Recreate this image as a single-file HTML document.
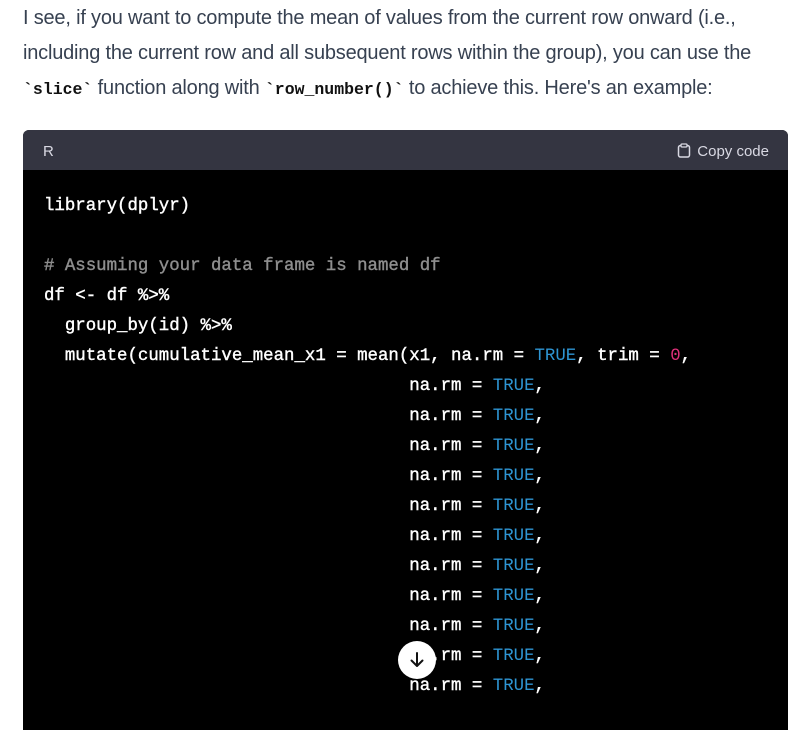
<!DOCTYPE html>
<html><head><meta charset="utf-8"><style>
body{margin:0;background:#fff;width:795px;height:706px;overflow:hidden;position:relative}
p{position:absolute;left:23px;top:1px;margin:0;width:790px;white-space:nowrap;font:20px/35px "Liberation Sans",sans-serif;color:#374151;letter-spacing:-0.2px}
p code{font:bold 16.5px "Liberation Mono",monospace;color:#111;letter-spacing:0}
.blk{position:absolute;left:23px;top:130px;width:765px;height:600px;background:#000;border-radius:6px 6px 0 0;overflow:hidden}
.hd{height:40px;background:#343541;color:#d9d9e3;font:15px "Liberation Sans",sans-serif;position:relative}
.hd .l{position:absolute;left:20px;top:13px}
.hd .r{position:absolute;right:19px;top:13px}
.code{padding-top:22px;padding-left:21px;font:17.4px "Liberation Mono",monospace;color:#fff;-webkit-text-stroke:0.4px #fff}
.code div{height:30px;line-height:30px;white-space:pre}
.c{color:#8e8e8e;-webkit-text-stroke:0.4px #8e8e8e}.t{color:#2e95d3;-webkit-text-stroke:0}.n{color:#df3079;-webkit-text-stroke:0}
.btn{position:absolute;left:398px;top:641px;width:38px;height:38px;border-radius:50%;background:#fff;display:flex;align-items:center;justify-content:center}
</style></head><body>
<p>I see, if you want to compute the mean of values from the current row onward (i.e.,<br>including the current row and all subsequent rows within the group), you can use the<br><code>`slice`</code> function along with <code>`row_number()`</code> to achieve this. Here's an example:</p>
<div class="blk"><div class="hd"><span class="l">R</span><span class="r"><svg width="14" height="15" viewBox="0 0 14 15" style="vertical-align:-2px;margin-right:6px"><rect x="1.5" y="2.5" width="11" height="11.5" rx="2" fill="none" stroke="#d9d9e3" stroke-width="1.5"/><rect x="4" y="1" width="6" height="3" rx="1" fill="#343541" stroke="#d9d9e3" stroke-width="1.3"/></svg>Copy code</span></div>
<div class="code">
<div>library(dplyr)</div>
<div> </div>
<div class="c"># Assuming your data frame is named df</div>
<div>df &lt;- df %&gt;%</div>
<div>  group_by(id) %&gt;%</div>
<div>  mutate(cumulative_mean_x1 = mean(x1, na.rm = <span class="t">TRUE</span>, trim = <span class="n">0</span>,</div>
<div>                                   na.rm = <span class="t">TRUE</span>,</div>
<div>                                   na.rm = <span class="t">TRUE</span>,</div>
<div>                                   na.rm = <span class="t">TRUE</span>,</div>
<div>                                   na.rm = <span class="t">TRUE</span>,</div>
<div>                                   na.rm = <span class="t">TRUE</span>,</div>
<div>                                   na.rm = <span class="t">TRUE</span>,</div>
<div>                                   na.rm = <span class="t">TRUE</span>,</div>
<div>                                   na.rm = <span class="t">TRUE</span>,</div>
<div>                                   na.rm = <span class="t">TRUE</span>,</div>
<div>                                   na.rm = <span class="t">TRUE</span>,</div>
<div>                                   na.rm = <span class="t">TRUE</span>,</div>
</div></div>
<div class="btn"><svg width="18" height="18" viewBox="0 0 18 18"><path d="M9 2v13M3.5 9.5L9 15l5.5-5.5" fill="none" stroke="#111" stroke-width="2" stroke-linecap="round" stroke-linejoin="round"/></svg></div>
</body></html>
